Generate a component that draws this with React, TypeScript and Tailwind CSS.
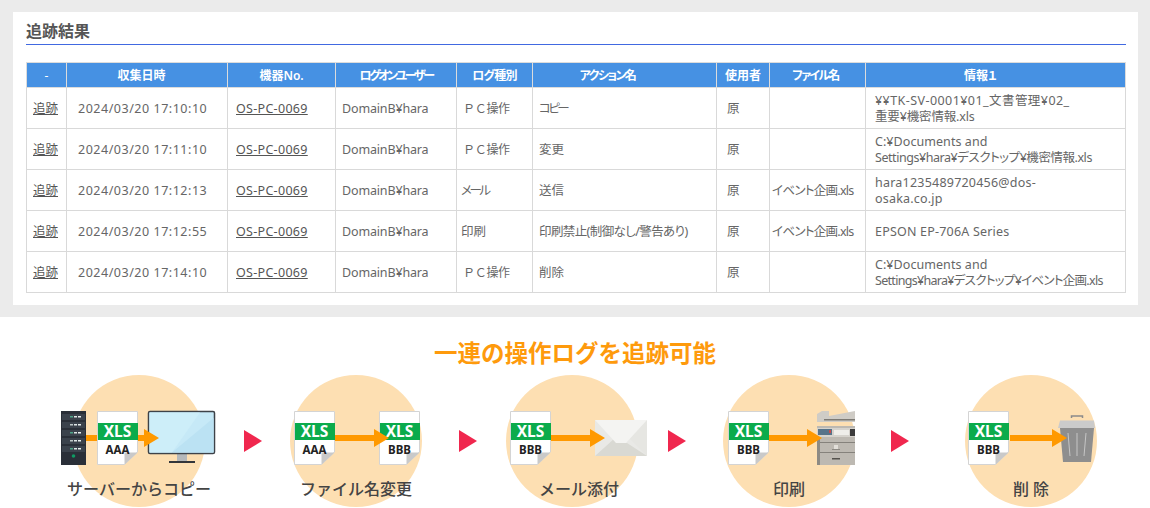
import React from "react";

const JP = "font-['Noto_Sans','Noto_Sans_CJK_JP',sans-serif]";
const PC = "pl-[6px] text-[12px] tracking-[-0.3px]";

const rows = [
  { date: "2024/03/20 17:10:10", kind: "ＰＣ操作", kindC: PC, action: "コピー", actC: "tracking-[-2.6px]", file: "", info: [["¥¥TK-SV-0001¥01_文書管理¥02_", "tracking-[0.44px]"], ["重要¥機密情報.xls", "tracking-[-0.15px]"]] },
  { date: "2024/03/20 17:11:10", kind: "ＰＣ操作", kindC: PC, action: "変更", actC: "", file: "", info: [["C:¥Documents and", "tracking-[0.06px]"], ["Settings¥hara¥デスクトップ¥機密情報.xls", "tracking-[-0.45px]"]] },
  { date: "2024/03/20 17:12:13", kind: "メール", kindC: "pl-1 tracking-[-2.4px] [font-feature-settings:'palt']", action: "送信", actC: "", file: "イベント企画.xls", info: [["hara1235489720456@dos-", "tracking-[0.22px]"], ["osaka.co.jp", "tracking-[0.2px]"]] },
  { date: "2024/03/20 17:12:55", kind: "印刷", kindC: "pl-1", action: "印刷禁止(制御なし/警告あり)", actC: "tracking-[-0.6px]", file: "イベント企画.xls", info: [["EPSON EP-706A Series", "tracking-[0.2px]"]] },
  { date: "2024/03/20 17:14:10", kind: "ＰＣ操作", kindC: PC, action: "削除", actC: "", file: "", info: [["C:¥Documents and", "tracking-[0.06px]"], ["Settings¥hara¥デスクトップ¥イベント企画.xls", "tracking-[-0.7px]"]] },
];

const heads = [
  ["-", "font-normal"],
  ["収集日時", "pr-[11px]"],
  ["機器No.", ""],
  ["ログオンユーザー", "tracking-[-2.4px]"],
  ["ログ種別", "tracking-[-0.7px]"],
  ["アクション名", "pr-[34px] tracking-[-1.6px]"],
  ["使用者", ""],
  ["ファイル名", "pr-[4px] tracking-[-1.7px]"],
  ["情報１", "pr-[30px]"],
];

function Doc({ x, name }: { x: number; name: string }) {
  return (
    <g>
      <path d={`M${x + 0.5} 411.5H${x + 40.5}V452L${x + 27.5} 464.5H${x + 0.5}Z`} fill="#fff" stroke="#d4d4d4" />
      <path d={`M${x + 27.5} 464.5V452.5H${x + 40.5}Z`} fill="#c9c9c9" />
      <rect x={x + 1} y={423} width={40} height={17} fill="#0bab4c" />
      <text x={x + 20.5} y={437} textAnchor="middle" fill="#fff" fontSize="15.5" fontWeight="700" fontFamily="'Noto Sans',sans-serif">XLS</text>
      <text x={x + 20.5} y={453.5} textAnchor="middle" fill="#222" fontSize="11.5" fontWeight="700" fontFamily="'Noto Sans',sans-serif">{name}</text>
    </g>
  );
}

function Arrow({ from, head }: { from: number; head: number }) {
  return <path d={`M${from} 435H${head}V429L${head + 15} 438L${head} 447V441H${from}Z`} fill="#ff9900" />;
}

function Server() {
  const ys = [414, 422, 430, 438, 446];
  return (
    <g>
      <rect x={61} y={411} width={25} height={54} fill="#2a2f38" />
      {ys.map((y, i) => (
        <g key={y}>
          <rect x={62} y={y} width={23} height={6} fill="#3b424c" />
          <rect x={70} y={y + 2} width={3} height={1.5} fill={i % 2 ? "#bfc8c8" : "#4fa58a"} />
          <rect x={74} y={y + 2} width={3} height={1.5} fill="#dfe6e6" />
          <rect x={78} y={y + 2} width={3} height={1.5} fill="#e8eeee" />
        </g>
      ))}
      <circle cx={73.5} cy={456} r={1.8} fill="#0f9a63" />
    </g>
  );
}

function Monitor() {
  return (
    <g>
      <rect x={177} y={453} width={10} height={8} fill="#b5b8ba" />
      <rect x={169} y={461} width={26} height={2} fill="#33363a" />
      <rect x={148.5} y={411.5} width={66} height={42} rx={1.5} fill="#c6e9f7" stroke="#3d4248" strokeWidth="1.5" />
      <path d="M172 452.5L213.5 418V452.5Z" fill="#bbe2f3" />
      <path d="M149.5 412.5H200L172 452.5H149.5Z" fill="#cdeef9" />
    </g>
  );
}

function Envelope() {
  return (
    <g>
      <rect x={595} y={420} width={52} height={36} fill="#e9e9e6" />
      <path d="M595 456L615 438L621 443H627L647 456Z" fill="#d9d9d3" />
      <path d="M647 456L627 436L647 420Z" fill="#e6e6e2" />
      <path d="M595 420H647L626 443H616Z" fill="#f4f4f2" />
    </g>
  );
}

function Copier() {
  return (
    <g>
      <rect x={817} y={426} width={38} height={39} fill="#bdb9b2" />
      <path d="M817 414L822 411H829L829 416L855 411V422H817Z" fill="#cfccc6" />
      <rect x={824} y={419} width={31} height={1.5} fill="#7d7a74" />
      <rect x={817} y={428} width={38} height={9} fill="#d6d3cd" />
      <rect x={818} y={429} width={14} height={6} fill="#58748a" />
      <rect x={829} y={430} width={2} height={3} fill="#c94b4b" />
      <rect x={834} y={430} width={15} height={5} fill="#efeeea" />
      <rect x={850} y={429} width={5} height={7} fill="#3b3b3b" />
      <rect x={820} y={442} width={35} height={1} fill="#85827c" />
      <rect x={820} y={452} width={35} height={1} fill="#85827c" />
      <rect x={817} y={437} width={3} height={28} fill="#8d8a84" />
      <rect x={834} y={445} width={4} height={4} fill="#e2dfd9" />
      <rect x={832} y={458} width={8} height={1.5} fill="#55524d" />
      <rect x={832} y={449} width={8} height={1} fill="#8d8a84" />
    </g>
  );
}

function Trash() {
  return (
    <g>
      <path d="M1071.5 418V416H1082.5V418" fill="none" stroke="#8b8b8b" strokeWidth="1.5" />
      <path d="M1060 420.5H1094L1095 428H1058Z" fill="#cbcbcb" />
      <path d="M1060 428H1094L1091 462H1063Z" fill="#8e8e8e" />
      <path d="M1068 433L1070 456M1077 433V456M1086 433L1084 456" stroke="#c6c6c6" strokeWidth="1" fill="none" />
    </g>
  );
}

function Step({ viewLeft, label, className, labelClass, children }: { viewLeft: number; label: string; className: string; labelClass?: string; children: React.ReactNode }) {
  return (
    <div className={`relative w-[132px] h-[132px] shrink-0 rounded-full bg-[#fddfb2] ${className}`}>
      <svg className="absolute inset-0 overflow-visible" width={132} height={132} viewBox={`${viewLeft} 375 132 132`}>
        {children}
      </svg>
      <div className={`absolute left-1/2 top-[102px] -translate-x-1/2 whitespace-nowrap text-[16px] leading-6 font-medium text-[#444] ${labelClass ?? ""}`}>{label}</div>
    </div>
  );
}

function Tri({ className }: { className: string }) {
  return <div className={`w-[18px] h-[22px] shrink-0 mt-[55px] bg-[#f0274e] [clip-path:polygon(0_0,100%_50%,0_100%)] ${className}`} />;
}

export default function App() {
  const widths = [40, 161, 108, 121, 76, 184, 53, 96, 260];
  const td = "border border-[#d9d9d9] h-[41px] p-0 align-middle";
  return (
    <div className={`w-[1150px] h-[508px] overflow-hidden bg-white text-[#666] ${JP}`}>
      <section className="h-[317px] bg-[#ebebeb] pt-3 pl-[13px] pr-3">
        <div className="h-[293px] bg-white pl-[13px] pr-3 pt-[10px]">
          <h2 className="h-[23px] border-b border-[#4169e1] text-[16px] leading-[18px] font-bold text-[#555]">追跡結果</h2>
          <table className="mt-[17px] w-[1100px] table-fixed border-collapse text-[12.5px] leading-4">
            <colgroup>
              {widths.map((w, i) => (
                <col key={i} style={{ width: w }} />
              ))}
            </colgroup>
            <thead>
              <tr>
                {heads.map(([h, c]) => (
                  <th key={h} className="h-[25px] border border-[#dcdcdc] bg-[#4691e3] p-0 pt-px text-center font-semibold text-[12px] text-white [font-feature-settings:'palt']">
                    <span className={`inline-block ${c}`}>{h}</span>
                  </th>
                ))}
              </tr>
            </thead>
            <tbody>
              {rows.map((r) => (
                <tr key={r.date}>
                  <td className={`${td} pl-[6px] pt-[2px]`}><a className="underline text-[#555]">追跡</a></td>
                  <td className={`${td} pl-[11px] pt-[2px] tracking-[0.52px] whitespace-nowrap`}>{r.date}</td>
                  <td className={`${td} pl-2 pt-[2px] tracking-[0.3px]`}><a className="underline text-[#555]">OS-PC-0069</a></td>
                  <td className={`${td} pl-[6px] pt-[2px] tracking-[-0.15px]`}>DomainB¥hara</td>
                  <td className={`${td} pt-[2px] ${r.kindC}`}>{r.kind}</td>
                  <td className={`${td} pl-[6px] pt-[2px] whitespace-nowrap [font-feature-settings:'palt'] ${r.actC}`}>{r.action}</td>
                  <td className={`${td} pl-[10px] pt-[2px]`}>原</td>
                  <td className={`${td} pl-[2px] pt-[2px] whitespace-nowrap tracking-[-0.7px] [font-feature-settings:'palt']`}>{r.file}</td>
                  <td className={`${td} pl-[9px] pt-[2px] whitespace-nowrap [font-feature-settings:'palt']`}>
                    {r.info.map(([l, c], i) => (
                      <div key={i} className={c}>{l}</div>
                    ))}
                  </td>
                </tr>
              ))}
            </tbody>
          </table>
        </div>
      </section>
      <section>
        <h1 className="pt-[22px] h-[58px] text-center text-[23.5px] leading-7 font-bold text-[#fe9a0c]">一連の操作ログを追跡可能</h1>
        <div className="flex items-start">
          <Step viewLeft={73} label="サーバーからコピー" className="ml-[73px]">
            <Server />
            <Monitor />
            <Arrow from={86} head={144} />
            <Doc x={97} name="AAA" />
          </Step>
          <Tri className="ml-[39px]" />
          <Step viewLeft={290} label="ファイル名変更" className="ml-[28px]">
            <Doc x={294} name="AAA" />
            <Doc x={379} name="BBB" />
            <Arrow from={335} head={374} />
          </Step>
          <Tri className="ml-[37px]" />
          <Step viewLeft={506} label="メール添付" className="ml-[29px]" labelClass="ml-[7px]">
            <Doc x={510} name="BBB" />
            <Envelope />
            <Arrow from={551} head={590} />
          </Step>
          <Tri className="ml-[30px]" />
          <Step viewLeft={723} label="印刷" className="ml-[37px]">
            <Doc x={728} name="BBB" />
            <Copier />
            <Arrow from={769} head={807} />
          </Step>
          <Tri className="ml-[36px]" />
          <Step viewLeft={965} label="削 除" className="ml-[56px]">
            <Doc x={968} name="BBB" />
            <Trash />
            <Arrow from={1010} head={1052} />
          </Step>
        </div>
      </section>
    </div>
  );
}
